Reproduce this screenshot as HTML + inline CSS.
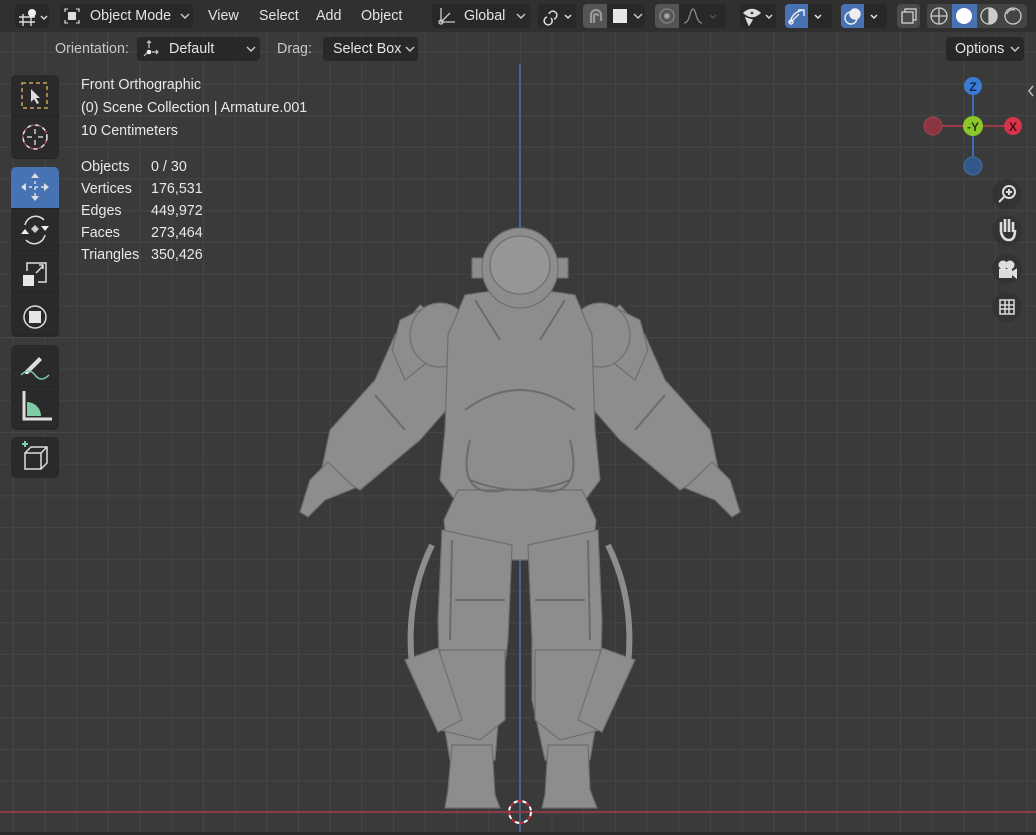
<!DOCTYPE html>
<html><head><meta charset="utf-8"><style>
*{margin:0;padding:0;box-sizing:border-box}
body{width:1036px;height:835px;overflow:hidden;background:#3a3a3a;font-family:"Liberation Sans",sans-serif;color:#e4e4e4;font-size:14.3px;position:relative}
.vp{position:absolute;left:0;top:32px;width:1036px;height:803px;
background-color:#3a3a3a;
background-image:linear-gradient(to right,#464646 1px,transparent 1px),linear-gradient(to bottom,#464646 1px,transparent 1px);
background-size:31.7px 31.7px;background-position:12.8px 19.8px}
.hdr{position:absolute;left:0;top:0;width:1036px;height:32px;background:#303030}
.b{position:absolute;background:#282828;border-radius:4px;height:24px;top:4px}
.t{position:absolute;white-space:nowrap}
.tb{position:absolute;left:11px;width:48px;background:#2a2a2a;border-radius:5px;overflow:hidden}
.tb div{height:42px;position:relative;border-bottom:1px solid #242424}
.ov{position:absolute;line-height:22px;font-size:14.3px;color:#e8e8e8}
.nav{position:absolute;left:992px;width:30px;height:30px;border-radius:50%;background:#333}
</style></head><body>
<div class="vp"></div>
<div style="position:absolute;left:519px;top:64px;width:2px;height:771px;background:#3f6590"></div>
<div style="position:absolute;left:0;top:811px;width:1036px;height:2px;background:#8b3a47"></div>
<div style="position:absolute;left:0;top:832px;width:1036px;height:3px;background:#2a2a2a"></div>

<svg style="position:absolute;left:0;top:0" width="1036" height="835">
<g fill="#8d8d8d" stroke="#6e6e6e" stroke-width="1.2">
<!-- arms -->
<path d="M420 305 L462 335 L455 400 L420 440 L360 490 L322 468 L330 430 L375 380 L395 335 Z"/>
<path d="M328 462 L355 488 L325 500 L308 517 L300 512 L310 480 Z"/>
<path d="M620 305 L578 335 L585 400 L620 440 L680 490 L718 468 L710 430 L665 380 L645 335 Z"/>
<path d="M712 462 L685 488 L715 500 L732 517 L740 512 L730 480 Z"/>
<!-- shoulder gear -->
<path d="M400 320 L420 310 L430 360 L405 380 L392 350Z"/>
<path d="M640 320 L620 310 L610 360 L635 380 L648 350Z"/>
<ellipse cx="440" cy="335" rx="30" ry="32"/>
<ellipse cx="600" cy="335" rx="30" ry="32"/>
<!-- torso -->
<path d="M465 295 Q520 285 575 295 L592 335 L595 430 L600 480 L585 500 L455 500 L440 480 L445 430 L448 335 Z"/>
<!-- hips -->
<path d="M458 490 L582 490 L596 520 L592 560 L448 560 L444 520 Z"/>
<!-- legs -->
<path d="M442 530 L512 545 L508 640 L500 700 L495 760 L450 760 L440 700 L438 620 Z"/>
<path d="M528 545 L598 530 L602 620 L600 700 L590 760 L545 760 L532 700 L532 640 Z"/>
<path d="M440 650 L505 650 L505 720 L480 740 L440 730 Z"/>
<path d="M535 650 L600 650 L600 730 L560 740 L535 720 Z"/>
<!-- boots -->
<path d="M452 745 L492 745 L495 795 L500 808 L445 808 L448 790 Z"/>
<path d="M548 745 L588 745 L590 790 L597 808 L542 808 L545 795 Z"/>
<!-- leg gear -->
<path d="M405 660 L438 648 L462 720 L438 732 Z"/>
<path d="M635 660 L602 648 L578 720 L602 732 Z"/>
<path d="M432 545 Q405 600 412 665" fill="none" stroke="#8d8d8d" stroke-width="6"/>
<path d="M608 545 Q635 600 628 665" fill="none" stroke="#8d8d8d" stroke-width="6"/>
<!-- helmet -->
<rect x="472" y="258" width="16" height="20"/>
<rect x="552" y="258" width="16" height="20"/>
<ellipse cx="520" cy="268" rx="38" ry="40"/>
<ellipse cx="520" cy="265" rx="30" ry="29" fill="#969696"/>
</g>
<g fill="none" stroke="#6c6c6c" stroke-width="2">
<path d="M475 300 L500 340 M565 300 L540 340"/>
<path d="M465 410 Q520 370 575 410"/>
<path d="M470 480 Q520 500 570 480"/>
<path d="M470 440 Q455 500 505 490 M570 440 Q585 500 535 490"/>
<path d="M455 600 L505 600 M535 600 L585 600"/>
<path d="M375 395 L405 430 M665 395 L635 430"/>
<path d="M452 540 L450 640 M588 540 L590 640"/>
</g>
<circle cx="520" cy="812" r="11" fill="none" stroke="#fff" stroke-width="2" stroke-dasharray="5 4"/>
<circle cx="520" cy="812" r="11" fill="none" stroke="#c8283a" stroke-width="2" stroke-dasharray="4 5" stroke-dashoffset="5"/>
<line x1="933" y1="126" x2="1013" y2="126" stroke="#9a3a46" stroke-width="2"/>
<line x1="973" y1="86" x2="973" y2="166" stroke="#3a6eb8" stroke-width="2"/>
<circle cx="933" cy="126" r="9" fill="#8a3540" stroke="#a54452"/>
<circle cx="973" cy="166" r="9" fill="#33598a" stroke="#3f6ea8"/>
<circle cx="1013" cy="126" r="9" fill="#d5344a"/>
<circle cx="973" cy="86" r="9" fill="#3a7bd6"/>
<circle cx="973" cy="126" r="10" fill="#8bc72a"/>
<text x="973" y="91" font-size="12" font-weight="bold" fill="#152a50" text-anchor="middle" font-family="Liberation Sans">Z</text>
<text x="1013" y="131" font-size="12" font-weight="bold" fill="#4a0d14" text-anchor="middle" font-family="Liberation Sans">X</text>
<text x="973" y="131" font-size="12" font-weight="bold" fill="#2b3a0a" text-anchor="middle" font-family="Liberation Sans">-Y</text>
<path d="M1033 86 L1029 91 L1033 96" fill="none" stroke="#bbb" stroke-width="1.5"/>
</svg>

<div class="nav" style="top:179px"></div>
<div class="nav" style="top:216px"></div>
<div class="nav" style="top:254px"></div>
<div class="nav" style="top:292px"></div>
<svg style="position:absolute;left:992px;top:179px" width="30" height="150" fill="none" stroke="#ddd" stroke-width="2">
<circle cx="17" cy="13" r="6"/><path d="M17 10v6M14 13h6M12 18l-5 5"/>
<path d="M9 53 v-10 M13 53 v-13 M17 53 v-13 M21 53 v-10 M9 53 q2 8 8 8 q6 0 6 -10" stroke-width="2.6"/>
<circle cx="11" cy="86" r="3.5" fill="#ddd"/><circle cx="18" cy="86" r="3.5" fill="#ddd"/><rect x="8" y="91" width="11" height="7" fill="#ddd"/><path d="M19 94 l5 -3 v7 z" fill="#ddd"/>
<path d="M8 121h14v14H8zM8 126h14M8 130h14M13 121v14M17 121v14" stroke-width="1.5"/>
</svg>

<div class="hdr">
<div class="b" style="left:15px;width:34px"></div>
<svg style="position:absolute;left:17px;top:6px" width="32" height="20" fill="none" stroke="#ddd" stroke-width="1.4"><path d="M2 11h16M2 16h16M6 8v12M14 8v12"/><circle cx="15" cy="7" r="4" fill="#eee" stroke="none"/><path d="M24 10l3 3 3-3"/></svg>
<div class="b" style="left:60px;width:133px"></div>
<svg style="position:absolute;left:64px;top:8px" width="16" height="16" fill="none" stroke="#ccc" stroke-width="1.3"><path d="M1 4V1h3M12 1h3v3M15 12v3h-3M4 15H1v-3"/><rect x="4" y="4" width="8" height="8" fill="#ddd" stroke="none"/></svg>
<div class="t" style="left:90px;top:8px">Object Mode</div>
<svg style="position:absolute;left:180px;top:13px" width="10" height="7" fill="none" stroke="#ccc" stroke-width="1.4"><path d="M1 1l4 4 4-4"/></svg>
<div class="t" style="left:208px;top:8px">View</div>
<div class="t" style="left:259px;top:8px">Select</div>
<div class="t" style="left:316px;top:8px">Add</div>
<div class="t" style="left:361px;top:8px">Object</div>
<div class="b" style="left:432px;width:98px"></div>
<svg style="position:absolute;left:437px;top:6px" width="20" height="20" fill="none" stroke="#ccc" stroke-width="1.3"><path d="M4 2v14h14M4 16l9-9"/><circle cx="4" cy="16" r="2"/></svg>
<div class="t" style="left:464px;top:8px">Global</div>
<svg style="position:absolute;left:516px;top:13px" width="10" height="7" fill="none" stroke="#ccc" stroke-width="1.4"><path d="M1 1l4 4 4-4"/></svg>
<div class="b" style="left:538px;width:38px"></div>
<svg style="position:absolute;left:541px;top:6px" width="34" height="20" fill="none" stroke="#ddd" stroke-width="1.5"><path d="M8 8a4 4 0 1 1 5 5M10 12a4 4 0 1 1-4-1"/><path d="M24 9l3 3 3-3"/></svg>
<div class="b" style="left:583px;width:62px"></div>
<div style="position:absolute;left:583px;top:4px;width:24px;height:24px;background:#545454;border-radius:4px 0 0 4px"></div>
<svg style="position:absolute;left:585px;top:6px" width="20" height="20" fill="none" stroke="#999" stroke-width="2.2"><path d="M6 17V9a5 5 0 0 1 10 0v6M9 17V10a2 2 0 0 1 4 0"/></svg>
<div style="position:absolute;left:613px;top:9px;width:14px;height:14px;background:#e6e6e6"></div>
<svg style="position:absolute;left:633px;top:13px" width="10" height="7" fill="none" stroke="#ccc" stroke-width="1.4"><path d="M1 1l4 4 4-4"/></svg>
<div class="b" style="left:655px;width:71px"></div>
<div style="position:absolute;left:655px;top:4px;width:24px;height:24px;background:#545454;border-radius:4px 0 0 4px"></div>
<svg style="position:absolute;left:657px;top:6px" width="64" height="20" fill="none" stroke="#888" stroke-width="1.3"><circle cx="10" cy="10" r="7"/><circle cx="10" cy="10" r="2.5" fill="#aaa"/><path d="M27 17 C33 17 33 3 36 3 C39 3 39 17 45 17"/><path d="M53 9l3 3 3-3" stroke="#555"/></svg>
<div class="b" style="left:740px;width:36px"></div>
<svg style="position:absolute;left:742px;top:6px" width="34" height="20" fill="none" stroke="#ddd" stroke-width="1.4"><path d="M2 7q8-7 16 0q-8 7-16 0z" fill="#ddd"/><circle cx="10" cy="7" r="2" fill="#303030"/><path d="M4 12l6 2-3 5z" fill="#ddd"/><path d="M24 9l3 3 3-3"/></svg>
<div class="b" style="left:785px;width:47px"></div>
<div style="position:absolute;left:785px;top:4px;width:23px;height:24px;background:#4772b3;border-radius:4px 0 0 4px"></div>
<svg style="position:absolute;left:786px;top:6px" width="46" height="20" fill="none" stroke="#eee" stroke-width="1.4"><path d="M4 17Q6 6 17 4M12 4h6v6M5 16l8-8"/><circle cx="5" cy="16" r="2"/><path d="M29 9l3 3 3-3"/></svg>
<div class="b" style="left:841px;width:46px"></div>
<div style="position:absolute;left:841px;top:4px;width:23px;height:24px;background:#4772b3;border-radius:4px 0 0 4px"></div>
<svg style="position:absolute;left:842px;top:6px" width="46" height="20" fill="none" stroke="#eee" stroke-width="1.4"><circle cx="9" cy="12" r="6"/><circle cx="13" cy="8" r="5" fill="#eee"/><path d="M29 9l3 3 3-3"/></svg>
<div class="b" style="left:897px;width:23px;background:#4a4a4a"></div>
<svg style="position:absolute;left:899px;top:6px" width="20" height="20" fill="none" stroke="#ddd" stroke-width="1.2"><rect x="3" y="6" width="11" height="11"/><path d="M6 6V3h11v11h-3"/></svg>
<div class="b" style="left:927px;width:100px;background:#454545"></div>
<div style="position:absolute;left:952px;top:4px;width:25px;height:24px;background:#4772b3"></div>
<svg style="position:absolute;left:927px;top:4px" width="100" height="24" fill="none" stroke="#ccc" stroke-width="1.3"><circle cx="12" cy="12" r="8"/><path d="M4 12h16M12 4v16"/><circle cx="37" cy="12" r="8" fill="#fff" stroke="none"/><circle cx="62" cy="12" r="8"/><path d="M62 4a8 8 0 0 1 0 16z" fill="#ccc"/><circle cx="86" cy="12" r="8"/><path d="M80 10a6 6 0 0 1 8-4" /></svg>
</div>

<div class="t" style="left:55px;top:41px;color:#c8c8c8">Orientation:</div>
<div class="b" style="left:137px;top:37px;width:123px"></div>
<svg style="position:absolute;left:141px;top:40px" width="20" height="18" fill="none" stroke="#ccc" stroke-width="1.2"><path d="M8 1v7M6 3l2-2 2 2M11 12h6M15 10l2 2-2 2M3 16l3-3"/><circle cx="8" cy="12" r="2.3" fill="#eee" stroke="none"/></svg>
<div class="t" style="left:169px;top:41px">Default</div>
<svg style="position:absolute;left:246px;top:46px" width="10" height="7" fill="none" stroke="#ccc" stroke-width="1.4"><path d="M1 1l4 4 4-4"/></svg>
<div class="t" style="left:277px;top:41px;color:#c8c8c8">Drag:</div>
<div class="b" style="left:323px;top:37px;width:95px"></div>
<div class="t" style="left:333px;top:41px">Select Box</div>
<svg style="position:absolute;left:405px;top:46px" width="10" height="7" fill="none" stroke="#ccc" stroke-width="1.4"><path d="M1 1l4 4 4-4"/></svg>
<div class="b" style="left:946px;top:37px;width:78px"></div>
<div class="t" style="left:955px;top:41px">Options</div>
<svg style="position:absolute;left:1010px;top:46px" width="10" height="7" fill="none" stroke="#ccc" stroke-width="1.4"><path d="M1 1l4 4 4-4"/></svg>

<div class="tb" style="top:75px;height:84px"><div></div><div></div></div>
<div class="tb" style="top:167px;height:170px"><div style="background:#4772b3"></div><div></div><div></div><div></div></div>
<div class="tb" style="top:345px;height:85px"><div></div><div></div></div>
<div class="tb" style="top:437px;height:41px"><div></div></div>
<svg style="position:absolute;left:11px;top:75px" width="48" height="410" fill="none" stroke="#ddd" stroke-width="1.5">
<rect x="11" y="8" width="25" height="25" stroke="#c9a85a" stroke-dasharray="4 3"/><path d="M20 14v13l3-3 3 5 2-1-3-5h4z" fill="#ddd" stroke="none"/>
<circle cx="24" cy="62" r="12" stroke="#e6e6e6" stroke-dasharray="5 3"/><circle cx="24" cy="62" r="12" stroke="#b4455a" stroke-dasharray="3 5" stroke-dashoffset="4"/><path d="M24 54v5M24 65v5M16 62h5M27 62h5" stroke="#ccc"/>
<path d="M24 100v24M12 112h24" stroke-dasharray="3 3"/><path d="M24 98l-4 5h8zM24 126l-4-5h8zM10 112l5-4v8zM38 112l-5-4v8z" fill="#ddd" stroke="none"/>
<path d="M14 150a11 11 0 0 1 19-5M34 160a11 11 0 0 1-19 5"/><path d="M24 150l4 4-4 4-4-4z" fill="#ccc" stroke="none"/><path d="M10 159l4-5 4 5zM30 151l4 5 4-5z" fill="#eee" stroke="none"/>
<rect x="12" y="200" width="11" height="11" fill="#e6e6e6" stroke="none"/><path d="M16 196v-8h19v19h-8M25 198l7-7M28 190h4v4"/>
<circle cx="24" cy="242" r="11"/><rect x="18" y="236" width="12" height="12" fill="#e6e6e6" stroke="none"/>
<path d="M14 296l14-14 3 3-14 14h-3z" fill="#ddd" stroke="none"/><path d="M10 300q8 -8 14 0t14 0" stroke="#7ccdaa"/>
<path d="M13 316v28h28" stroke="#ddd" stroke-width="3"/><path d="M16 341v-14a14 14 0 0 1 14 14z" fill="#7dcca6" stroke="none"/>
<path d="M11 369h6M14 366v6" stroke="#7ccdaa" stroke-width="2"/><path d="M14 378h16v16H14zM14 378l6-6h16v16l-6 6M30 378l6-6"/>
</svg>

<div class="ov" style="left:81px;top:74px">Front Orthographic</div>
<div class="ov" style="left:81px;top:97px">(0) Scene Collection | Armature.001</div>
<div class="ov" style="left:81px;top:120px">10 Centimeters</div>
<div class="ov" style="left:81px;top:156px">Objects<br>Vertices<br>Edges<br>Faces<br>Triangles</div>
<div class="ov" style="left:151px;top:156px">0 / 30<br>176,531<br>449,972<br>273,464<br>350,426</div>
</body></html>
